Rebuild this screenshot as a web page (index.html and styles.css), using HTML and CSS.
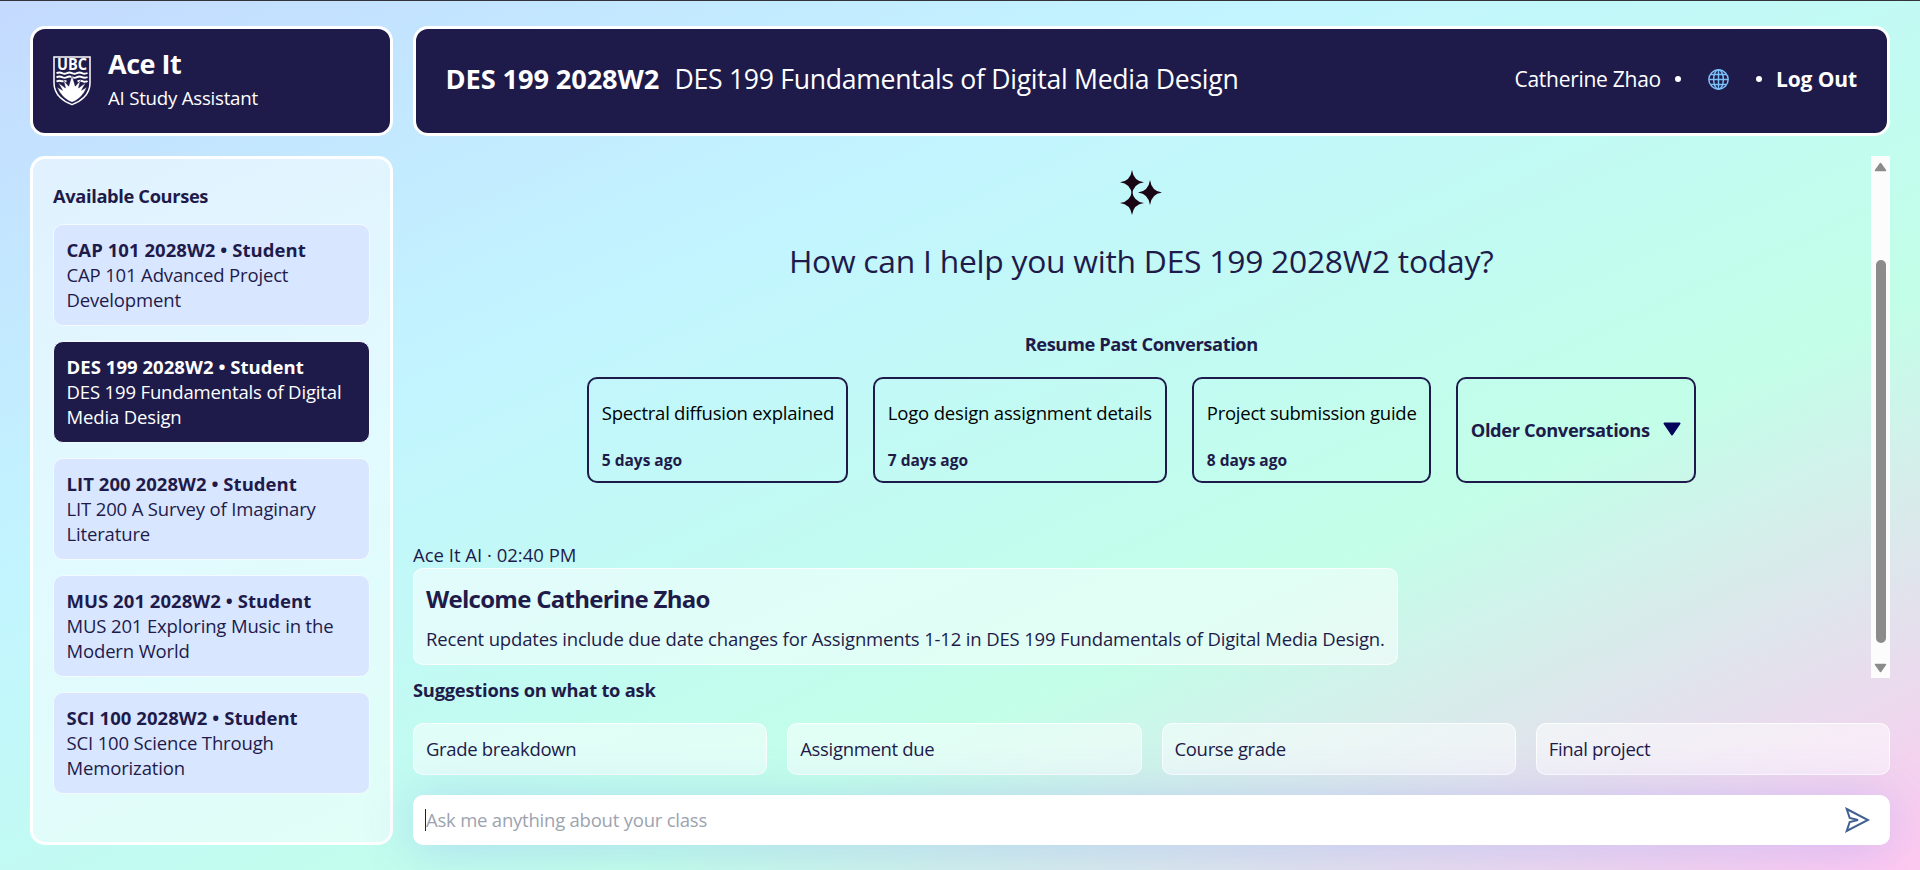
FILE: index.html
```
<!DOCTYPE html>
<html lang="en">
<head>
<meta charset="utf-8">
<title>Ace It - AI Study Assistant</title>
<link rel="stylesheet" href="styles.css">
</head>
<body>
<div class="app">
  <aside class="left">
    <div class="brand">
      <svg class="crest" viewBox="0 0 38 50">
        <path d="M1 1H37V27C37 39 27 46 19 48.600C11 46 1 39 1 27Z" fill="none" stroke="#fff" stroke-width="1.500"/>
        <text x="19" y="14" text-anchor="middle" textLength="30" lengthAdjust="spacingAndGlyphs" class="crest-text">UBC</text>
        <g fill="none" stroke="#fff" stroke-width="1.900">
          <path d="M3.500 17.200Q6.500 15.800 9 17.100T14 17.100T19 17.100T24 17.100T29 17.100T34.500 17"/>
          <path d="M3.500 21.300Q6.500 19.900 9 21.200T14 21.200T19 21.200T24 21.200T29 21.200T34.500 21"/>
          <path d="M3.500 25.500Q6.500 24 9 25.300L13.500 25.300M24.500 25.300Q27.500 24.200 30 25.300T34.500 25"/>
        </g>
        <path d="M4 31L9.500 34.300L5.300 26.800L12.500 32L10.500 24.300L15.700 30.200L19 19.300L22.300 30.200L27.500 24.300L25.500 32L32.700 26.800L28.500 34.300L34 31L31.300 36.200Q26.500 43.500 19 46.300Q11.500 43.500 6.700 36.200Z" fill="#fff" stroke="#1e1b4b" stroke-width=".5"/>
      </svg>
      <div class="brand-text">
        <div class="brand-name">Ace It</div>
        <div class="brand-sub">AI Study Assistant</div>
      </div>
    </div>
    <nav class="courses">
      <h3 class="courses-title">Available Courses</h3>
      <div class="course"><strong>CAP 101 2028W2 • Student</strong><br>CAP 101 Advanced Project Development</div>
      <div class="course active"><strong>DES 199 2028W2 • Student</strong><br>DES 199 Fundamentals of Digital Media Design</div>
      <div class="course"><strong>LIT 200 2028W2 • Student</strong><br>LIT 200 A Survey of Imaginary Literature</div>
      <div class="course"><strong>MUS 201 2028W2 • Student</strong><br>MUS 201 Exploring Music in the Modern World</div>
      <div class="course"><strong>SCI 100 2028W2 • Student</strong><br>SCI 100 Science Through Memorization</div>
    </nav>
  </aside>
  <main class="main">
    <header class="header">
      <div class="code">DES 199 2028W2</div>
      <div class="title">DES 199 Fundamentals of Digital Media Design</div>
      <div class="user">Catherine Zhao</div>
      <i class="dot dot-a"></i>
      <svg class="globe" viewBox="0 0 20 20" fill="none" stroke="#7cc0f8" stroke-width="1.400">
        <circle cx="10" cy="10" r="9.200"/><ellipse cx="10" cy="10" rx="4.600" ry="9.200"/>
        <path d="M10 .8V19.200M.8 10H19.200M2.500 5.200H17.500M2.500 14.800H17.500"/>
      </svg>
      <i class="dot dot-b"></i>
      <div class="logout">Log Out</div>
    </header>
    <section class="scroll">
      <div class="chat">
        <div class="intro">
          <svg class="sparkles" viewBox="0 0 42 45" fill="#1a0515">
            <path d="M12 0Q13.500 11 24 12.300Q13.500 13.600 12 24.600Q10.500 13.600 0 12.300Q10.500 11 12 0Z"/>
            <path d="M12 20.700Q13.500 31.700 24 33Q13.500 34.300 12 45Q10.500 34.300 0 33Q10.500 31.700 12 20.700Z"/>
            <path d="M30 10Q31.500 21.200 42 22.500Q31.500 23.800 30 35Q28.500 23.800 18 22.500Q28.500 21.200 30 10Z"/>
          </svg>
          <h1 class="question">How can I help you with DES 199 2028W2 today?</h1>
          <h3 class="resume">Resume Past Conversation</h3>
          <div class="convs">
            <div class="conv conv-1"><span>Spectral diffusion explained</span><b>5 days ago</b></div>
            <div class="conv conv-2"><span>Logo design assignment details</span><b>7 days ago</b></div>
            <div class="conv conv-3"><span>Project submission guide</span><b>8 days ago</b></div>
            <div class="conv older"><span>Older Conversations</span>
              <svg class="caret-down" viewBox="0 0 18 14"><path d="M1.500 1.500H16.500L9 12.500Z" fill="#03045a" stroke="#03045a" stroke-width="2" stroke-linejoin="round"/></svg>
            </div>
          </div>
        </div>
        <div class="stamp">Ace It AI · 02:40 PM</div>
        <div class="bubble">
          <h2 class="welcome">Welcome Catherine Zhao</h2>
          <p class="update">Recent updates include due date changes for Assignments 1-12 in DES 199 Fundamentals of Digital Media Design.</p>
        </div>
      </div>
      <div class="bar">
        <svg class="arrow" viewBox="0 0 13 10"><path d="M6.500 1.500L11.500 8.500H1.500Z"/></svg>
        <div class="thumb"></div>
        <svg class="arrow" viewBox="0 0 13 10"><path d="M6.500 8.500L11.500 1.500H1.500Z"/></svg>
      </div>
    </section>
    <h3 class="suggest-title">Suggestions on what to ask</h3>
    <div class="suggests">
      <div class="suggest">Grade breakdown</div>
      <div class="suggest">Assignment due</div>
      <div class="suggest">Course grade</div>
      <div class="suggest">Final project</div>
    </div>
    <div class="ask">
      <i class="cursor"></i>
      <span class="placeholder">Ask me anything about your class</span>
      <svg class="send" viewBox="0 0 25 26" fill="none" stroke="#3f6090" stroke-width="2" stroke-linejoin="miter"><path d="M1.700 2L23 13L1.700 24L4.700 15L13 13L4.700 11Z"/></svg>
    </div>
  </main>
</div>
</body>
</html>
```
FILE: styles.css
```
* { box-sizing: border-box; }
body {
  margin: 0;
  font: 18.5px/25px "Open Sans", "Noto Sans", sans-serif;
  letter-spacing: -0.18px;
  color: #1e1b4b;
}
h1, h2, h3, p { margin: 0; font-size: inherit; }
h2, h3 { font-weight: 700; }
svg { display: block; flex: none; }

.app {
  height: 870px;
  border-top: 1px solid #35333a;
  padding: 25px 30px;
  display: flex;
  gap: 20px;
  background: linear-gradient(to bottom right, #c4daff 0%, #c2f5ff 33.300%, #c2ffe8 66.600%, #ffc8f0 100%);
  overflow: hidden;
}

/* left column */
.left { width: 363px; flex: none; display: flex; flex-direction: column; gap: 20px; }
.brand {
  height: 110px;
  border: 3px solid #fff;
  border-radius: 15px;
  background: #1e1b4b;
  color: #fff;
  padding: 0 20px;
  display: flex;
  align-items: center;
  gap: 17px;
}
.crest { width: 38px; height: 50px; overflow: visible; }
.crest-text { font: 700 15.500px "Open Sans", sans-serif; letter-spacing: 0; fill: #fff; }
.brand-text { padding-bottom: 7px; }
.brand-name { font-size: 27px; font-weight: 700; letter-spacing: -0.5px; line-height: 36px; }
.brand-sub { font-size: 18.700px; letter-spacing: -0.25px; line-height: 25px; margin-top: 3px; }
.courses {
  height: 689px;
  border: 3px solid #fff;
  border-radius: 15px;
  background: rgba(255, 255, 255, .5);
  padding: 24px 20px;
  display: flex;
  flex-direction: column;
  gap: 15px;
}
.courses-title { margin-bottom: 1px; font-size: 18.300px; letter-spacing: -0.36px; }
.course {
  height: 102px;
  border: 1px solid #f4faff;
  border-radius: 10px;
  background: #d9e6ff;
  padding: 11.500px 12.500px;
  letter-spacing: -0.15px;
}
.course strong { letter-spacing: 0.05px; }
.active { background: #1e1b4b; color: #fff; }

/* right column */
.main { flex: 1; min-width: 0; display: flex; flex-direction: column; }
.header {
  height: 110px;
  flex: none;
  border: 3px solid #fff;
  border-radius: 15px;
  background: #1e1b4b;
  color: #fff;
  padding: 0 30px 0 29.500px;
  display: flex;
  align-items: center;
  white-space: nowrap;
}
.header > * { flex: none; }
.code { font-size: 27.200px; font-weight: 700; letter-spacing: -0.1px; width: 229px; padding-bottom: 5px; }
.title { font-size: 26.600px; letter-spacing: -0.29px; flex: 1; padding-bottom: 4px; }
.user { font-size: 21px; letter-spacing: -0.28px; padding-bottom: 4px; }
.dot { width: 6px; height: 6px; border-radius: 50%; background: #fff; }
.dot-a { margin: 0 27px 4px 14px; }
.globe { width: 21px; height: 21px; margin-bottom: 4px; }
.dot-b { margin: 0 14px 4px 27px; }
.logout { font-size: 21px; font-weight: 700; letter-spacing: -0.1px; padding-bottom: 4px; }

.scroll { margin-top: 20px; height: 522px; flex: none; display: flex; overflow: hidden; }
.chat { flex: 1; min-width: 0; }
.intro { display: flex; flex-direction: column; align-items: center; padding: 14px 1.500px 0 0; }
.sparkles { width: 42px; height: 45px; }
.question { font-size: 31.800px; font-weight: 400; letter-spacing: -0.25px; line-height: 44px; margin-top: 24px; }
.resume { margin: 48px 0 21px; font-size: 18.300px; letter-spacing: -0.42px; }
.convs { display: flex; gap: 25px; }
.conv {
  height: 106px;
  border: 2px solid #1e1b4b;
  border-radius: 10px;
  padding: 21px 13px 10px;
  display: flex;
  flex-direction: column;
  justify-content: space-between;
  white-space: nowrap;
  letter-spacing: -0.25px;
  color: #000;
}
.conv b { font-size: 15.500px; line-height: 22px; letter-spacing: 0; color: #1e1b4b; }
.conv-1 { width: 261px; }
.conv-2 { width: 294px; letter-spacing: -0.17px; }
.conv-3 { width: 239px; }
.older {
  width: 240px;
  flex-direction: row;
  align-items: center;
  padding: 0 13px 2px;
  font-size: 18.300px;
  font-weight: 700;
  letter-spacing: -0.38px;
  color: #1e1b4b;
}
.caret-down { width: 18px; height: 14px; }

.stamp { margin-top: 59px; letter-spacing: 0; }
.bubble {
  width: 985px;
  height: 97px;
  margin-top: 1px;
  border: 1px solid rgba(255, 255, 255, .8);
  border-radius: 10px;
  background: rgba(255, 255, 255, .5);
  padding: 14px 12px;
}
.welcome { font-size: 24px; line-height: 32px; letter-spacing: -0.72px; }
.update { margin-top: 11px; white-space: nowrap; letter-spacing: -0.165px; }

.bar { width: 19px; background: #fcfcfc; display: flex; flex-direction: column; align-items: center; padding: 6px 0 5px; }
.arrow { width: 13px; height: 10px; fill: #8b8b8b; stroke: #8b8b8b; stroke-width: 1.500; stroke-linejoin: round; }
.thumb { width: 10px; height: 383px; margin: 88px 0 20px; border-radius: 5px; background: #8b8b8b; flex: none; }

.suggest-title { margin: -1px 0 21px; font-size: 18.300px; letter-spacing: -0.22px; }
.suggests { display: grid; grid-template-columns: repeat(4, 1fr); gap: 20px; }
.suggest {
  height: 52px;
  border: 1px solid rgba(255, 255, 255, .8);
  border-radius: 10px;
  background: rgba(255, 255, 255, .5);
  padding: 11.500px 12px;
  letter-spacing: -0.33px;
}
.ask {
  margin-top: 20px;
  height: 50px;
  border-radius: 10px;
  background: #fff;
  box-shadow: 0 4px 50px rgba(110, 120, 255, .26);
  padding: 0 20px 0 12px;
  display: flex;
  align-items: center;
}
.cursor { width: 1px; height: 22px; background: #1e1b4b; }
.placeholder { flex: 1; color: #9ca3af; letter-spacing: -0.22px; padding-bottom: 2px; }
.send { width: 25px; height: 26px; }
```
